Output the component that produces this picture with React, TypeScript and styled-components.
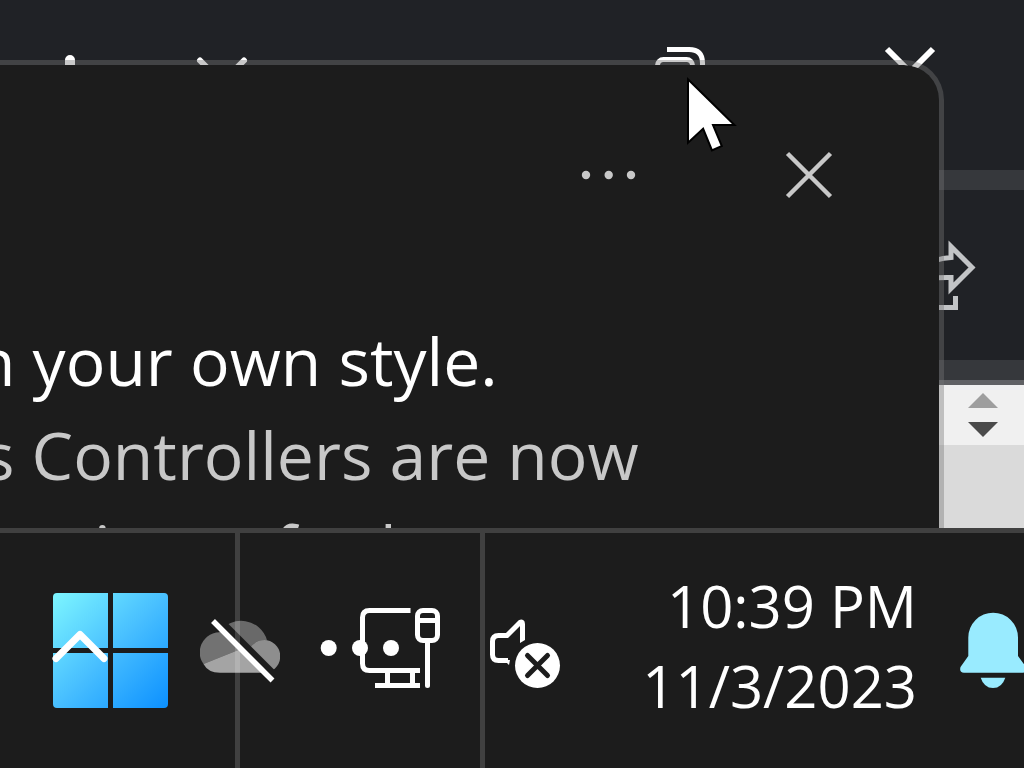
import React from "react";
import styled, { createGlobalStyle } from "styled-components";

const GlobalStyle = createGlobalStyle`
  *, *::before, *::after { box-sizing: border-box; }
  html, body { margin: 0; background: #1c1c1c; }
  body { font-family: "Open Sans", "Noto Sans", sans-serif; overflow: hidden; }
  p { margin: 0; }
  svg { display: block; overflow: visible; }
`;

const Desktop = styled.div`
  display: flex;
  flex-direction: column;
  height: 100vh;
  min-height: 600px;
  overflow: hidden;
`;

const Workspace = styled.main`
  position: relative;
  display: flex;
  flex-direction: column;
  flex: 1;
  min-height: 0;
  overflow: hidden;
  background: #202226;
`;

const IconButton = styled.button`
  display: block;
  flex: none;
  padding: 0;
  border: 0;
  background: none;
  color: inherit;
`;

const TitleBar = styled.header`
  display: flex;
  flex: none;
  justify-content: space-between;
  align-items: flex-start;
  height: 170px;
  padding: 47px 89px 0 45px;
  color: #fff;
`;

const TitleGroup = styled.div<{ $gap: number }>`
  display: flex;
  gap: ${(p) => p.$gap}px;
`;

const Divider = styled.div`
  flex: none;
  height: 20px;
  background: #36383c;
`;

const ToolBar = styled.div`
  display: flex;
  flex: none;
  justify-content: flex-end;
  align-items: center;
  height: 170px;
  padding-right: 49px;
  color: #c2c4c6;
`;

const SortHeader = styled.div`
  display: flex;
  flex: none;
  flex-direction: column;
  align-items: flex-end;
  justify-content: center;
  gap: 14px;
  height: 65px;
  padding-right: 26px;
  border-top: 5px solid #606164;
  background: #f0f0f0;
`;

const Pane = styled.div`
  flex: 1;
  background: #dadada;
`;

const Toast = styled.section`
  position: absolute;
  inset: 60px 80px 0 0;
  overflow: hidden;
  border: solid rgba(117, 117, 117, 0.4);
  border-width: 5px 5px 0 0;
  border-top-right-radius: 40px;
  background: #1c1c1c;
  background-clip: padding-box;
  color: #c8c8c8;
`;

const ToastActions = styled.div`
  display: flex;
  justify-content: flex-end;
  gap: 152px;
  padding: 88px 108px 0 0;
`;

const ToastText = styled.div`
  margin-top: 116px;
  font-size: 66px;
  line-height: 94px;
  white-space: nowrap;
`;

const Line = styled.p<{ $scroll: number; $strong?: boolean }>`
  margin-left: -${(p) => p.$scroll}px;
  color: ${(p) => (p.$strong ? "#fff" : "inherit")};
`;

const Pointer = styled.svg`
  position: absolute;
  top: 78px;
  left: 686px;
`;

const TaskBar = styled.footer`
  display: flex;
  flex: none;
  align-items: center;
  height: 240px;
  padding-left: 53px;
  border-top: 5px solid #404040;
  background:
    linear-gradient(#404040, #404040) 235px 0 / 5px 100% no-repeat,
    linear-gradient(#404040, #404040) 480px 0 / 5px 100% no-repeat,
    #1c1c1c;
  color: #fff;
`;

const TrayButton = styled(IconButton)<{ $before?: number }>`
  position: relative;
  margin-left: ${(p) => p.$before ?? 0}px;
`;

const Overlay = styled.svg`
  position: absolute;
  top: 0;
  left: 0;
`;

const Clock = styled.time`
  display: flex;
  flex-direction: column;
  margin: 0 43px 0 auto;
  padding-bottom: 9px;
  font-size: 58px;
  line-height: 80px;
  text-align: right;
  white-space: nowrap;
`;

export default function App() {
  return (
    <>
      <GlobalStyle />
      <Desktop>
        <Workspace>
          <TitleBar>
            <TitleGroup $gap={102}>
              <IconButton aria-label="New tab">
                <svg width="50" height="50" fill="none" stroke="currentColor" strokeWidth="10" strokeLinecap="round">
                  <path d="M25 13v42M5 34h40" />
                </svg>
              </IconButton>
              <IconButton aria-label="Tab list">
                <svg width="50" height="50" fill="none" stroke="currentColor" strokeWidth="6" strokeLinecap="round" strokeLinejoin="round">
                  <path d="M3 13.500L25 35.500L47 13.500" />
                </svg>
              </IconButton>
            </TitleGroup>
            <TitleGroup $gap={180}>
              <IconButton aria-label="Restore">
                <svg width="50" height="50" fill="none" stroke="currentColor" strokeWidth="5">
                  <path d="M12 2.500H34Q47.500 2.500 47.500 16V38" />
                  <rect x="2.500" y="12.500" width="35" height="35" rx="6" />
                </svg>
              </IconButton>
              <IconButton aria-label="Close window">
                <svg width="50" height="50" fill="none" stroke="currentColor" strokeWidth="6">
                  <path d="M2 2L48 48M48 2L2 48" />
                </svg>
              </IconButton>
            </TitleGroup>
          </TitleBar>
          <Divider />
          <ToolBar>
            <IconButton aria-label="Share">
              <svg width="70" height="80" fill="none" stroke="currentColor" strokeWidth="5">
                <path d="M10 47Q14 25 46 22.500V11.500L67 32.500L46 53.500V42.500Q24 42 10 47" />
                <path d="M14 30H4V72.500H50.500V61" />
              </svg>
            </IconButton>
          </ToolBar>
          <Divider />
          <SortHeader>
            <IconButton aria-label="Scroll up">
              <svg width="30" height="15"><path d="M15 0L30 15H0Z" fill="#9e9e9e" /></svg>
            </IconButton>
            <IconButton aria-label="Scroll down">
              <svg width="30" height="15"><path d="M0 0H30L15 15Z" fill="#4a4a4a" /></svg>
            </IconButton>
          </SortHeader>
          <Pane />

          <Toast aria-label="Notification">
            <ToastActions>
              <IconButton aria-label="More options">
                <svg width="53" height="44" fill="currentColor">
                  <circle cx="4" cy="22" r="4.200" />
                  <circle cx="26.700" cy="22" r="4.200" />
                  <circle cx="49" cy="22" r="4.200" />
                </svg>
              </IconButton>
              <IconButton aria-label="Dismiss">
                <svg width="44" height="44" fill="none" stroke="currentColor" strokeWidth="4.500">
                  <path d="M0.500 0.500L43.500 43.500M43.500 0.500L0.500 43.500" />
                </svg>
              </IconButton>
            </ToastActions>
            <ToastText>
              <Line $scroll={25} $strong>n your own style.</Line>
              <Line $scroll={17}>s Controllers are now</Line>
              <Line $scroll={82}>experience for less</Line>
            </ToastText>
          </Toast>

          <Pointer width="50" height="74" aria-hidden="true">
            <path
              d="M3 3.700L46 46H25.500L34.500 67.500L26.500 71L17.500 49L3 62.500Z"
              fill="#fff" stroke="#000" strokeWidth="4" paintOrder="stroke"
            />
          </Pointer>
        </Workspace>

        <TaskBar>
          <TrayButton aria-label="Start">
            <svg width="115" height="115">
              <defs>
                <linearGradient id="start" gradientUnits="userSpaceOnUse" x1="0" y1="0" x2="115" y2="115">
                  <stop offset="0" stopColor="#7df6ff" />
                  <stop offset="0.500" stopColor="#48bfff" />
                  <stop offset="1" stopColor="#0c90ff" />
                </linearGradient>
              </defs>
              <path
                fill="url(#start)"
                d="M4 0H55V55H0V4Q0 0 4 0ZM60 0H111Q115 0 115 4V55H60ZM0 60H55V115H4Q0 115 0 111ZM60 60H115V111Q115 115 111 115H60Z"
              />
            </svg>
            <Overlay width="115" height="115" fill="none" stroke="#fff" strokeWidth="7" strokeLinecap="round" strokeLinejoin="round">
              <path d="M3 65.500L27 41.500L51 65.500" />
            </Overlay>
          </TrayButton>

          <TrayButton $before={32} aria-label="Cloud storage, not signed in">
            <svg width="80" height="115">
              <defs>
                <mask id="cut" maskUnits="userSpaceOnUse" x="0" y="0" width="80" height="115">
                  <rect width="80" height="115" fill="#fff" />
                  <path d="M0 8.600L80 88.600" stroke="#000" strokeWidth="8.600" />
                </mask>
              </defs>
              <g mask="url(#cut)" fill="#fff">
                <path fillOpacity="0.340" d="M19 39.300A27 27 0 0 1 67 47.200Q56 46 50 55L46.500 53.700L25 40Z" />
                <path fillOpacity="0.380" d="M3.500 71A20 20 0 0 1 25 40L46.500 53.700Z" />
                <path fillOpacity="0.500" d="M46.500 53.700L50 55Q56 46 67 47.200A16.400 16.400 0 0 1 64 79.700H71Z" />
                <path fillOpacity="0.600" d="M3.500 71L46.500 53.700L71 79.700H20Q8 79.700 3.500 71Z" />
              </g>
              <path d="M13 28L72.500 87.500" stroke="#fff" strokeWidth="5.500" />
            </svg>
          </TrayButton>

          <TrayButton $before={41} aria-label="Network">
            <svg width="119" height="115" fill="none" stroke="currentColor" strokeWidth="5">
              <path d="M89.500 17.500H48.500Q41.500 17.500 41.500 24.500V70.500Q41.500 77.500 48.500 77.500H99" />
              <path d="M66.500 77.500V92.500M91.500 77.500V92.500M54 92.500H99" />
              <rect x="96.500" y="17.500" width="20" height="30" rx="5.500" />
              <path d="M96.500 27.500H116.500" />
              <path d="M106.500 49V92.500" strokeLinecap="round" />
            </svg>
            <Overlay width="119" height="115" fill="#fff">
              <circle cx="7.700" cy="55" r="8" />
              <circle cx="39" cy="55" r="8" />
              <circle cx="70" cy="55" r="8" />
            </Overlay>
          </TrayButton>

          <TrayButton $before={50} aria-label="Volume, no device">
            <svg width="70" height="115" fill="none">
              <path
                d="M18 67.500H8.500Q2.500 67.500 2.500 61.500V48.500Q2.500 42.500 8.500 42.500H17L30 29.500Q32.500 28 32.500 31V46.500"
                stroke="currentColor" strokeWidth="5"
              />
              <path d="M30 44H35V47L30 50ZM14 67H20L19 72Z" fill="currentColor" />
              <circle cx="47.500" cy="72.500" r="22.500" fill="currentColor" />
              <path d="M37.500 62.500L57.500 82.500M57.500 62.500L37.500 82.500" stroke="#1c1c1c" strokeWidth="5" strokeLinecap="round" />
            </svg>
          </TrayButton>

          <Clock dateTime="2023-11-03T22:39">
            <span>10:39 PM</span>
            <span>11/3/2023</span>
          </Clock>

          <TrayButton aria-label="Notifications">
            <svg width="64" height="115" fill="#99ebff">
              <path d="M8.300 44.500A24.800 24.800 0 0 1 58 44.500V63L66 74Q67 79.700 62 79.700H4Q-1 79.700 0.500 74L8.300 63Z" />
              <path d="M20.700 84.700H45.300Q42 95 33 95Q24 95 20.700 84.700Z" />
            </svg>
          </TrayButton>
        </TaskBar>
      </Desktop>
    </>
  );
}
